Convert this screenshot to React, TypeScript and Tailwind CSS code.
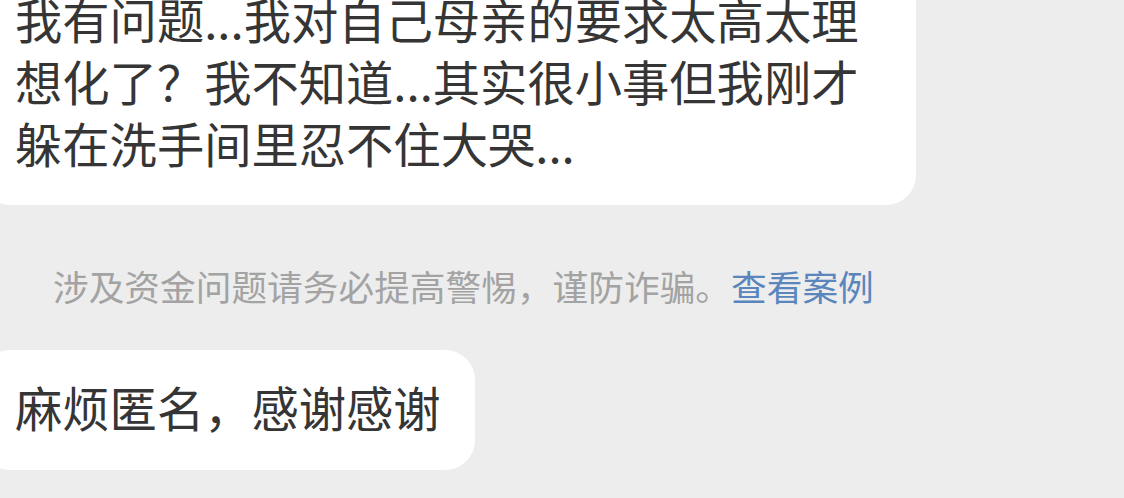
export default function App() {
  const lines = [
    "我有问题...我对自己母亲的要求太高太理",
    "想化了？我不知道...其实很小事但我刚才",
    "躲在洗手间里忍不住大哭...",
  ]

  return (
    <div
      className="h-[498px] w-[1124px] overflow-hidden bg-[#ededed]"
      style={{ fontFamily: '"Noto Sans CJK SC", "Noto Sans", sans-serif' }}
    >
      {/* incoming message, scrolled partly off the top */}
      <div className="-ml-[20px] -mt-[35px] w-[936px] rounded-[30px] bg-white pb-[31px] pl-[35px] pt-[23px] text-[47.3px] leading-[62px] text-[#353535]">
        {lines.map((line) => (
          <div key={line} className="whitespace-nowrap">
            {line}
          </div>
        ))}
      </div>

      {/* safety notice */}
      <div className="mt-[59px] whitespace-nowrap pl-[53px] text-[35.7px] leading-[44px] text-[#a3a3a3]">
        涉及资金问题请务必提高警惕，谨防诈骗。<span className="text-[#5a86bd]">查看案例</span>
      </div>

      {/* second message */}
      <div className="-ml-[20px] mt-[42px] w-[495px] rounded-[30px] bg-white pb-[32px] pl-[35px] pt-[25px] text-[47.3px] leading-[63px] text-[#353535]">
        <div className="whitespace-nowrap">麻烦匿名，感谢感谢</div>
      </div>
    </div>
  )
}
